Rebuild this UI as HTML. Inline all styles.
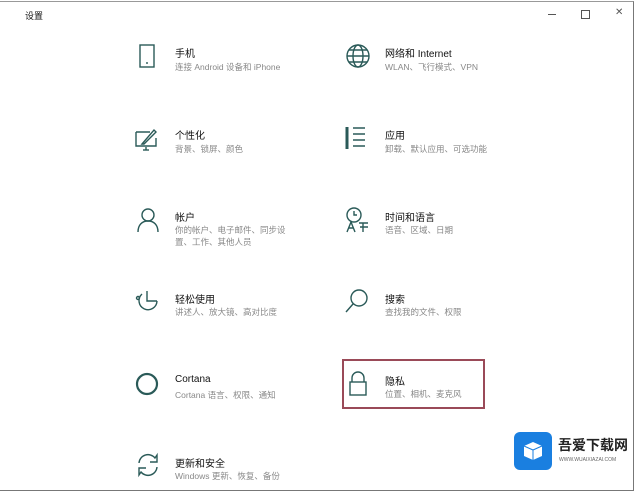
<!DOCTYPE html>
<html><head><meta charset="utf-8"><style>
body{margin:0;width:638px;height:493px;background:#fff;position:relative;overflow:hidden;font-family:"Liberation Sans","Noto Sans CJK SC",sans-serif;color:#222}
.win{position:absolute;left:0;top:1px;width:633px;height:488px;border-top:1px solid #999;border-right:1px solid #777;border-bottom:1px solid #777}
.t{position:absolute;font-size:10px;color:#111}
.s{position:absolute;font-size:8.5px;color:#888;line-height:12px}
svg.i{position:absolute;fill:none;stroke:#2a5a58;stroke-width:1.4}
</style></head><body>
<div class="win"></div>
<div class="t" style="left:25px;top:9px;font-size:9px">设置</div>
<div style="position:absolute;left:548px;top:14px;width:8px;height:1px;background:#555"></div>
<div style="position:absolute;left:581px;top:10px;width:7px;height:7px;border:1px solid #555"></div>
<div class="t" style="left:615px;top:7px;color:#555">✕</div>

<svg class="i" style="left:138px;top:43px" width="20" height="26"><rect x="2" y="2" width="14" height="22"/><line x1="8" y1="20" x2="10" y2="20"/></svg>
<div class="t" style="left:175px;top:45px">手机</div><div class="s" style="left:175px;top:61px">连接 Android 设备和 iPhone</div>

<svg class="i" style="left:134px;top:126px" width="26" height="26"><path d="M2 6h14M2 6v14h20V12M2 20"/><path d="M8 18l12-14 2 2-12 12z"/><line x1="12" y1="21" x2="12" y2="24"/><line x1="9" y1="24" x2="15" y2="24"/></svg>
<div class="t" style="left:175px;top:127px">个性化</div><div class="s" style="left:175px;top:143px">背景、锁屏、颜色</div>

<svg class="i" style="left:136px;top:207px" width="24" height="26"><circle cx="12" cy="8" r="6"/><path d="M2 25c0-7 4-11 10-11s10 4 10 11"/></svg>
<div class="t" style="left:175px;top:209px">帐户</div><div class="s" style="left:175px;top:224px">你的帐户、电子邮件、同步设<br>置、工作、其他人员</div>

<svg class="i" style="left:134px;top:288px" width="26" height="26"><path d="M13 3v10h10"/><path d="M8 6a9 9 0 1 0 15 7"/><circle cx="4" cy="10" r="1.5"/></svg>
<div class="t" style="left:175px;top:291px">轻松使用</div><div class="s" style="left:175px;top:306px">讲述人、放大镜、高对比度</div>

<svg class="i" style="left:134px;top:371px;stroke-width:2.2" width="26" height="26"><circle cx="13" cy="13" r="10"/></svg>
<div class="t" style="left:175px;top:374px">Cortana</div><div class="s" style="left:175px;top:389px">Cortana 语言、权限、通知</div>

<svg class="i" style="left:134px;top:451px" width="28" height="28"><path d="M5 12a9 9 0 0 1 16-5l2-3v7h-7"/><path d="M23 16a9 9 0 0 1-16 5l-2 3v-7h7"/></svg>
<div class="t" style="left:175px;top:455px">更新和安全</div><div class="s" style="left:175px;top:470px">Windows 更新、恢复、备份</div>

<svg class="i" style="left:345px;top:43px" width="26" height="26"><circle cx="13" cy="13" r="11"/><ellipse cx="13" cy="13" rx="5" ry="11"/><line x1="2" y1="13" x2="24" y2="13"/><line x1="4" y1="7" x2="22" y2="7"/><line x1="4" y1="19" x2="22" y2="19"/></svg>
<div class="t" style="left:385px;top:45px">网络和 Internet</div><div class="s" style="left:385px;top:61px">WLAN、飞行模式、VPN</div>

<svg class="i" style="left:345px;top:125px" width="26" height="26"><path d="M2 2v22" style="stroke-width:3"/><path d="M8 3h12M8 9h12M8 15h12M8 21h12"/></svg>
<div class="t" style="left:385px;top:127px">应用</div><div class="s" style="left:385px;top:143px">卸载、默认应用、可选功能</div>

<svg class="i" style="left:344px;top:206px" width="28" height="28"><circle cx="10" cy="9" r="7"/><path d="M10 5v4h3"/><path d="M3 26l4-10 4 10M4.5 22h5"/><path d="M15 17h9M19 17v9M16 21h8"/></svg>
<div class="t" style="left:385px;top:209px">时间和语言</div><div class="s" style="left:385px;top:224px">语音、区域、日期</div>

<svg class="i" style="left:344px;top:288px" width="26" height="26"><circle cx="15" cy="10" r="8"/><line x1="9" y1="16" x2="2" y2="24"/></svg>
<div class="t" style="left:385px;top:291px">搜索</div><div class="s" style="left:385px;top:306px">查找我的文件、权限</div>

<div style="position:absolute;left:342px;top:359px;width:143px;height:50px;border:2px solid #9a4a58;box-sizing:border-box"></div>
<svg class="i" style="left:348px;top:371px" width="20" height="26"><path d="M4 11V7a6 6 0 0 1 12 0v4"/><rect x="2" y="11" width="16" height="13"/></svg>
<div class="t" style="left:385px;top:373px">隐私</div><div class="s" style="left:385px;top:388px">位置、相机、麦克风</div>

<div style="position:absolute;left:514px;top:432px;width:38px;height:38px;border-radius:6px;background:#1a7fe0"></div>
<svg style="position:absolute;left:522px;top:440px" width="22" height="22"><path d="M11 2l9 4v10l-9 4-9-4V6z" fill="#fff"/><path d="M11 10l9-4M11 10v10M11 10L2 6" stroke="#1a7fe0" stroke-width="1" fill="none"/></svg>
<div style="position:absolute;left:558px;top:435px;font-size:14px;font-weight:bold;color:#222">吾爱下载网</div>
<div style="position:absolute;left:559px;top:457px;font-size:5px;color:#666">WWW.WUAIXIAZAI.COM</div>
</body></html>
